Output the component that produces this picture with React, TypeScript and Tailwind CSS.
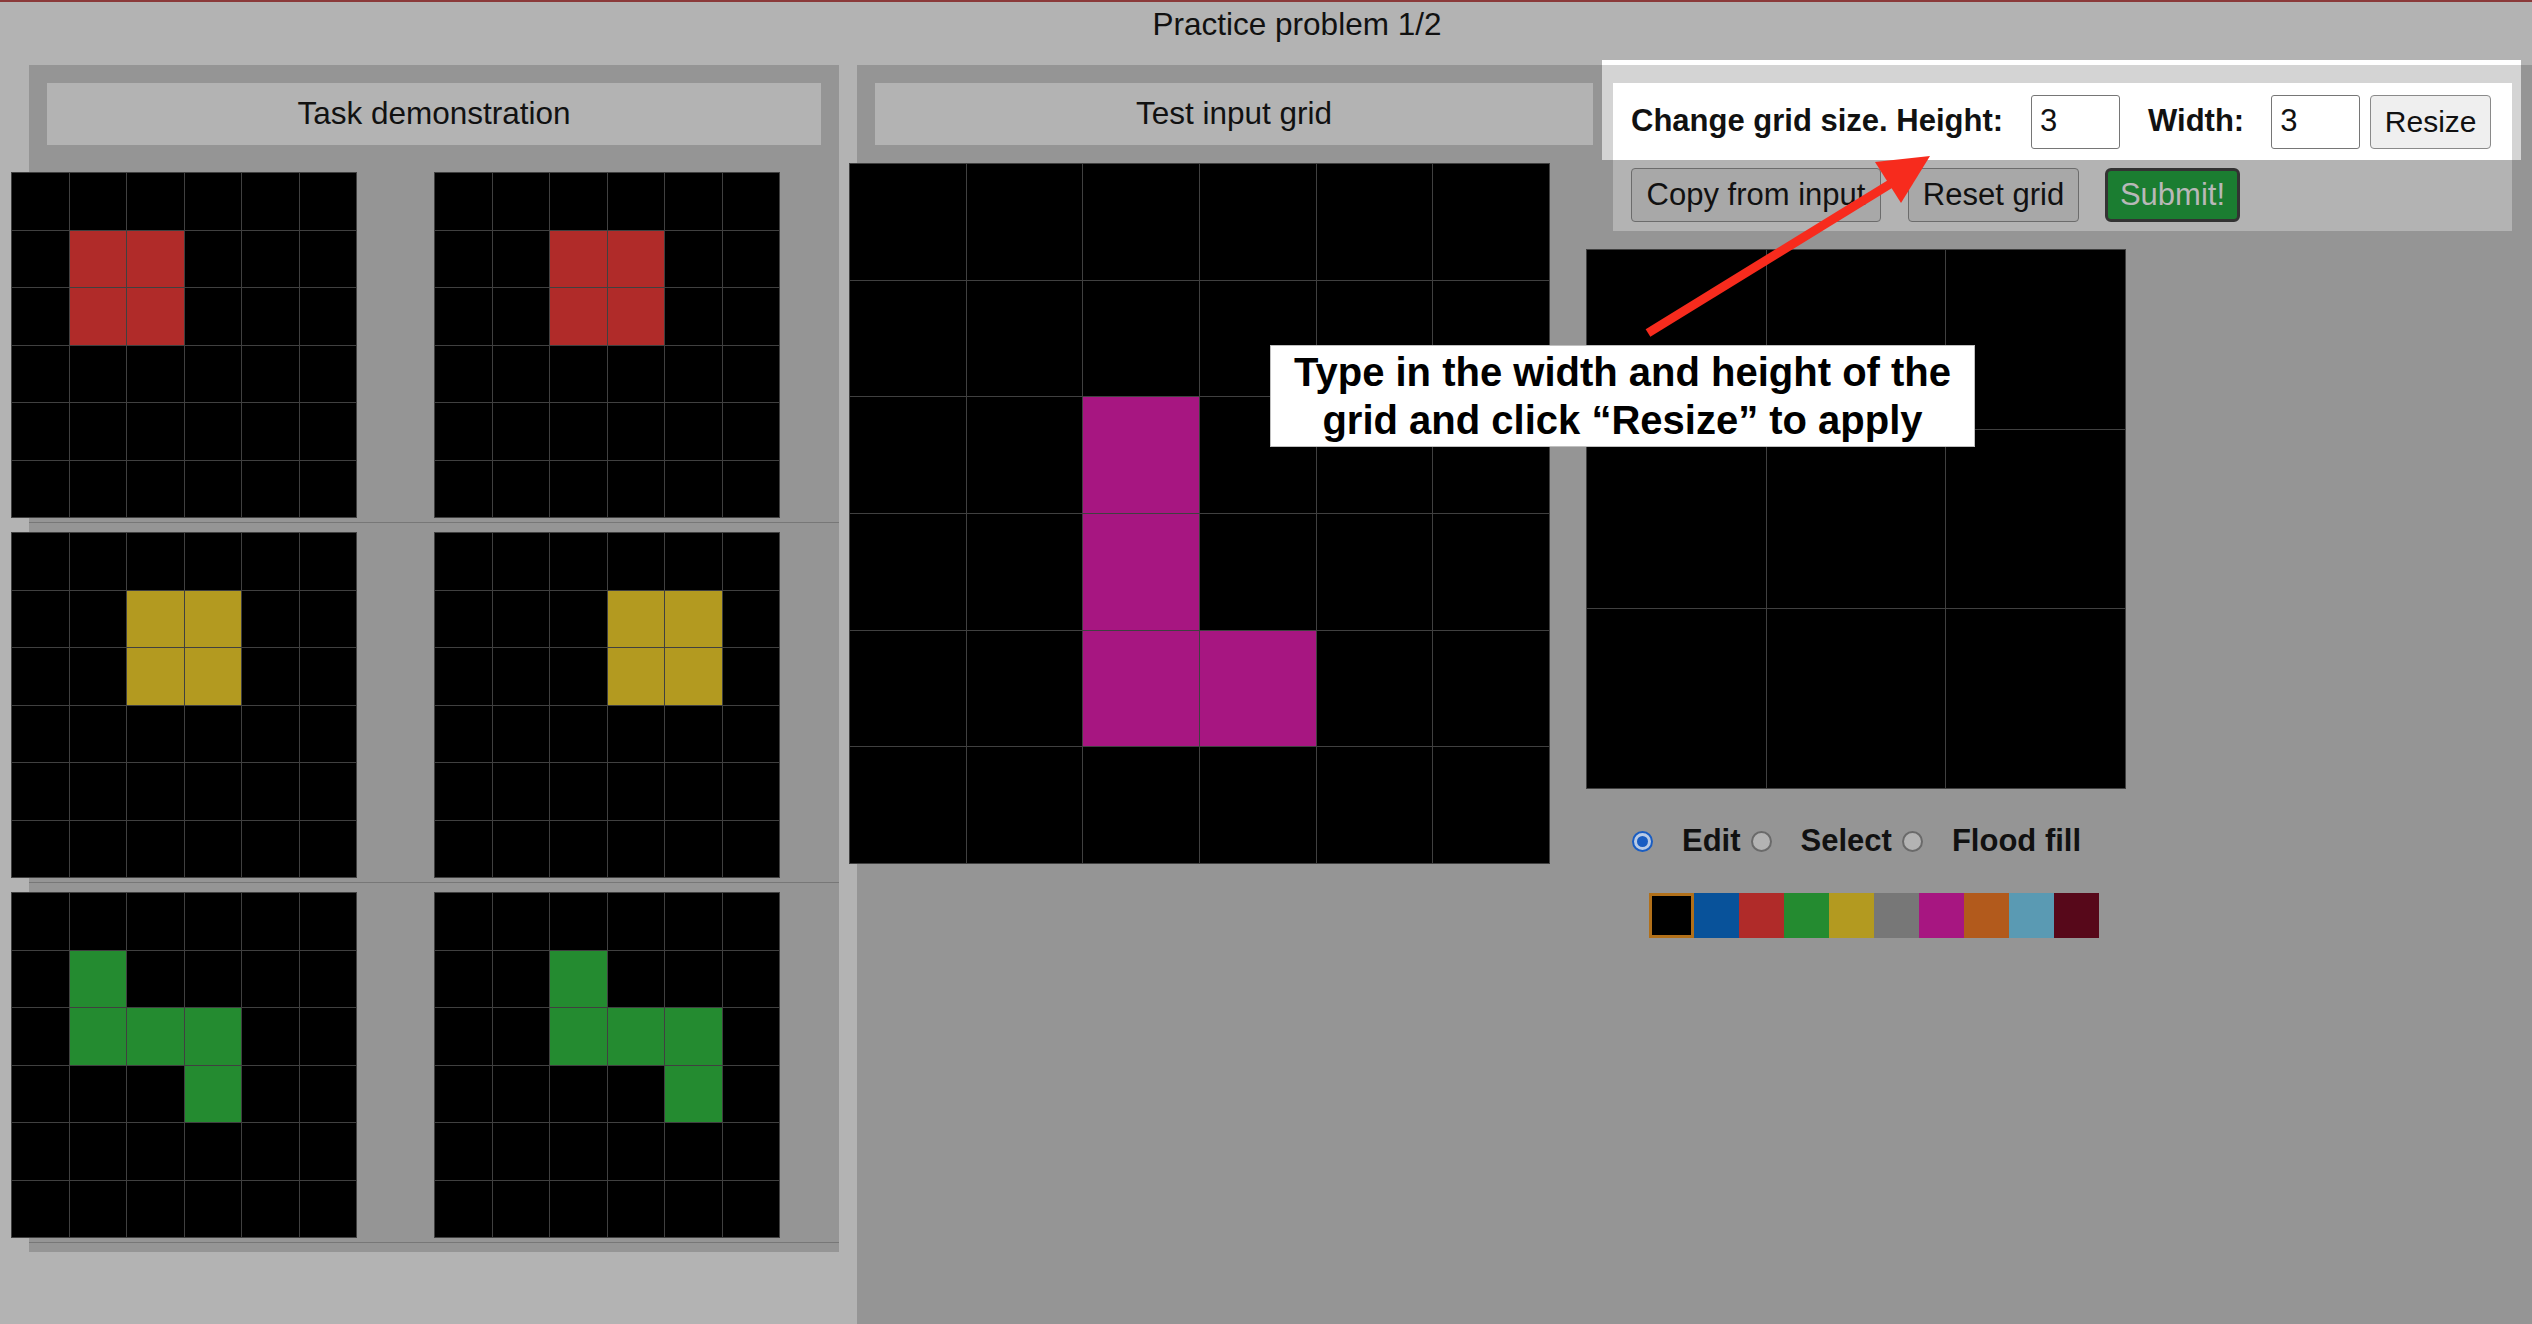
import React from 'react';

const SWATCH = [
  'bg-black',
  'bg-[#08529a]',
  'bg-[#b02b29]',
  'bg-[#248b30]',
  'bg-[#b39a20]',
  'bg-[#777777]',
  'bg-[#a71681]',
  'bg-[#b25a1c]',
  'bg-[#5a9ab3]',
  'bg-[#57081a]',
];

type Cell = [number, number];

function makeGrid(size: number, cells: Cell[], color: number): number[] {
  const out = new Array(size * size).fill(0);
  cells.forEach(([r, c]) => {
    out[r * size + c] = color;
  });
  return out;
}

function Grid({ data, className }: { data: number[]; className: string }) {
  return (
    <div className={`grid gap-px p-px bg-[#404040] shrink-0 ${className}`}>
      {data.map((v, i) => (
        <div key={i} className={SWATCH[v]} />
      ))}
    </div>
  );
}

const pairs: { input: number[]; output: number[] }[] = [
  {
    input: makeGrid(6, [[1, 1], [1, 2], [2, 1], [2, 2]], 2),
    output: makeGrid(6, [[1, 2], [1, 3], [2, 2], [2, 3]], 2),
  },
  {
    input: makeGrid(6, [[1, 2], [1, 3], [2, 2], [2, 3]], 4),
    output: makeGrid(6, [[1, 3], [1, 4], [2, 3], [2, 4]], 4),
  },
  {
    input: makeGrid(6, [[1, 1], [2, 1], [2, 2], [2, 3], [3, 3]], 3),
    output: makeGrid(6, [[1, 2], [2, 2], [2, 3], [2, 4], [3, 4]], 3),
  },
];

const testInput = makeGrid(6, [[2, 2], [3, 2], [4, 2], [4, 3]], 6);
const outputGrid = makeGrid(3, [], 0);

function Radio({ checked, className = '' }: { checked?: boolean; className?: string }) {
  if (checked) {
    return (
      <div className={`w-[21px] h-[21px] rounded-full border-2 border-[#1a5dc2] bg-[#b9cbe6] flex items-center justify-center shrink-0 ${className}`}>
        <div className="w-[11px] h-[11px] rounded-full bg-[#1a5dc2]" />
      </div>
    );
  }
  return (
    <div className={`w-[21px] h-[21px] rounded-full border-2 border-[#6a6a6a] bg-[#b3b3b3] shrink-0 ${className}`} />
  );
}

export default function App() {
  return (
    <div className="relative w-[2532px] h-[1324px] overflow-hidden bg-[#b3b3b3] text-[#111] font-['Liberation_Sans',Arial,sans-serif]">
      {/* header */}
      <div className="h-[65px] border-t-2 border-[#8b3a3a] pt-[4px] pl-[62px] flex justify-center">
        <span className="text-[31.5px] leading-[37px]">Practice problem 1/2</span>
      </div>

      <div className="flex items-start pl-[29px] gap-[18px] h-[1259px]">
        {/* Task demonstration */}
        <div className="w-[810px] bg-[#959595] pt-[18px] pb-[9px] shrink-0">
          <div className="mx-[18px] h-[62px] bg-[#b3b3b3] flex items-center justify-center text-[31.5px]">
            Task demonstration
          </div>
          <div className="mt-[27px] flex flex-col gap-[9px]">
            {pairs.map((p, i) => (
              <div key={i} className="pb-[4px] border-b border-[#777777] flex gap-[77px]">
                <Grid data={p.input} className="-ml-[18px] w-[346px] h-[346px] grid-cols-6 grid-rows-6" />
                <Grid data={p.output} className="w-[346px] h-[346px] grid-cols-6 grid-rows-6" />
              </div>
            ))}
          </div>
        </div>

        {/* Test input */}
        <div className="w-[745px] h-full bg-[#959595] pt-[18px] shrink-0">
          <div className="ml-[18px] mr-[9px] h-[62px] bg-[#b3b3b3] flex items-center justify-center text-[31.5px]">
            Test input grid
          </div>
          <Grid data={testInput} className="mt-[18px] -ml-[8px] w-[701px] h-[701px] grid-cols-6 grid-rows-6" />
        </div>

        {/* Output editor */}
        <div className="flex-1 h-full bg-[#959595] -ml-[18px] flex flex-col">
          <div className="-mt-[5px] w-[919px] border-t-[5px] border-white bg-[#d4d4d4] pt-[18px] pl-[11px]">
            <div className="w-[899px] h-[77px] bg-white flex items-center pl-[18px] whitespace-nowrap">
              <span className="font-bold text-[31px] shrink-0">Change grid size. Height:</span>
              <div className="ml-[28px] w-[89px] h-[54px] shrink-0 bg-white border border-[#767676] rounded-[3px] pl-[8px] flex items-center text-[31px]">
                3
              </div>
              <span className="ml-[28px] font-bold text-[31px] shrink-0">Width:</span>
              <div className="ml-[27px] w-[89px] h-[54px] shrink-0 bg-white border border-[#767676] rounded-[3px] pl-[8px] flex items-center text-[31px]">
                3
              </div>
              <button className="ml-[10px] w-[121px] h-[54px] shrink-0 bg-[#efefef] border border-[#8a8a8a] rounded-[4px] text-[30px]">
                Resize
              </button>
            </div>
          </div>
          <div className="ml-[11px] w-[899px] h-[71px] bg-[#b3b3b3] pt-[8px] pl-[18px] flex items-start whitespace-nowrap">
            <button className="w-[250px] h-[54px] bg-[#a8a8a8] border border-[#6c6c6c] rounded-[4px] text-[31px]">
              Copy from input
            </button>
            <button className="ml-[27px] w-[171px] h-[54px] bg-[#a8a8a8] border border-[#6c6c6c] rounded-[4px] text-[31px]">
              Reset grid
            </button>
            <button className="ml-[26px] w-[135px] h-[54px] bg-[#1b7d31] border-[3px] border-[#333333] rounded-[6px] text-[31px] text-[#b8b8b8]">
              Submit!
            </button>
          </div>

          <Grid data={outputGrid} className="mt-[18px] -ml-[16px] w-[540px] h-[540px] grid-cols-3 grid-rows-3" />

          <div className="mt-[37px] ml-[30px] h-[30px] flex items-center font-bold text-[31px] whitespace-nowrap">
            <Radio checked />
            <span className="ml-[29px]">Edit</span>
            <Radio className="ml-[10px]" />
            <span className="ml-[29px]">Select</span>
            <Radio className="ml-[10px]" />
            <span className="ml-[29px]">Flood fill</span>
          </div>

          <div className="mt-[37px] ml-[47px] flex">
            {SWATCH.map((c, i) => (
              <div
                key={i}
                className={`w-[45px] h-[45px] ${c} ${i === 0 ? 'border-[3px] border-[#b1701a]' : ''}`}
              />
            ))}
          </div>
        </div>
      </div>

      {/* tutorial callout */}
      <div className="absolute left-[1270px] top-[345px] w-[705px] h-[102px] bg-white border border-[#c0c0c0] pt-[2px] text-center font-bold text-[40px] leading-[48px] text-black">
        <div>Type in the width and height of the</div>
        <div>grid and click “Resize” to apply</div>
      </div>
      <svg className="absolute inset-0 pointer-events-none" width="2532" height="1324">
        <line x1="1648" y1="333" x2="1895" y2="181" stroke="#f72b1d" strokeWidth="9" />
        <polygon points="1930,156 1875,162 1901,203" fill="#f72b1d" />
      </svg>
    </div>
  );
}
